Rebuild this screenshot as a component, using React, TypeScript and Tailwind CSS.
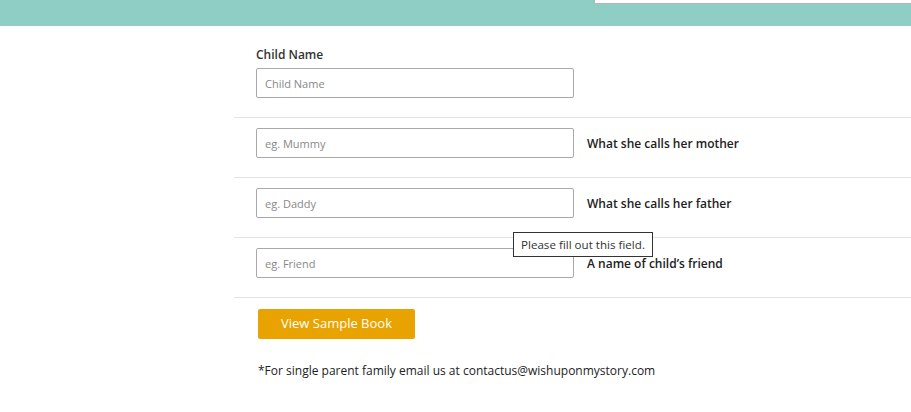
import React from 'react';

const rows = [
  { placeholder: 'eg. Mummy', label: 'What she calls her mother' },
  { placeholder: 'eg. Daddy', label: 'What she calls her father' },
  { placeholder: 'eg. Friend', label: 'A name of child\u2019s friend' },
];

export default function App() {
  return (
    <div className="relative min-h-[412px] w-[911px] overflow-hidden bg-white font-['Open_Sans',sans-serif] text-[#222]">
      {/* Bandeau */}
      <header className="relative h-[26px] bg-[#8fcec4]">
        <div className="absolute right-0 top-0 h-[4px] w-[317px] border-b border-l border-[#b5b5b5] bg-white" />
      </header>

      <main className="ml-[234px]">
        {/* Nom de l'enfant */}
        <div className="border-b border-[#e3e3e3] pb-[19px] pl-[22px] pt-[20px]">
          <label className="block text-[12px] font-semibold leading-[18px] text-[#333]">Child Name</label>
          <input
            placeholder="Child Name"
            className="mt-[4px] h-[30px] w-[318px] rounded-[2px] border border-[#a9a9a9] px-[8px] text-[11px] placeholder:text-[#888] focus:outline-none"
          />
        </div>

        {rows.map((r) => (
          <div key={r.label} className="flex items-center border-b border-[#e3e3e3] pb-[19px] pl-[22px] pt-[10px]">
            <input
              placeholder={r.placeholder}
              className="h-[30px] w-[318px] rounded-[2px] border border-[#a9a9a9] px-[8px] text-[11px] placeholder:text-[#888] focus:outline-none"
            />
            <span className="ml-[13px] mt-[2px] text-[12px] font-semibold text-[#222]">{r.label}</span>
          </div>
        ))}

        <div className="pl-[24px] pt-[11px]">
          <button className="h-[30px] w-[157px] rounded-[2px] bg-[#e8a300] text-[13px] text-white">
            View Sample Book
          </button>
          <p className="mt-[23px] text-[12px] text-[#222]">
            *For single parent family email us at contactus@wishuponmystory.com
          </p>
        </div>
      </main>

      {/* Infobulle */}
      <div className="absolute left-[513px] top-[232px] h-[25px] border border-[#333] bg-white px-[7px] text-[11.6px] leading-[23px] text-[#333]">
        Please fill out this field.
      </div>
    </div>
  );
}
